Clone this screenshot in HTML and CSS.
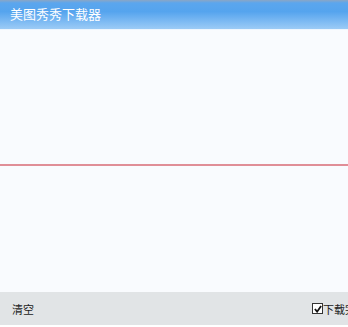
FILE: index.html
```html
<!DOCTYPE html>
<html lang="zh-CN">
<head>
  <meta charset="UTF-8" />
  <title>美图秀秀下载器</title>
  <link rel="stylesheet" href="styles.css">
</head>
<body>
<div class="app">
  <header class="titlebar">美图秀秀下载器</header>
  <section class="list"></section>
  <div class="divider"></div>
  <section class="list list-bottom"></section>
  <footer class="toolbar">
    <span class="clear">清空</span>
    <label class="auto">
      <span class="check">
        <svg width="8" height="8" viewBox="0 0 9 9"><path d="M1 4.5 L3.5 7.5 L8 1" fill="none" stroke="#111" stroke-width="2"/></svg>
      </span>下载完成后自动关闭
    </label>
  </footer>
</div>
</body>
</html>
```

FILE: styles.css
```css
body { margin: 0; background: #fff; font-family: "Noto Sans CJK SC", "DejaVu Sans", sans-serif; }
.app { width: 348px; height: 327px; display: flex; flex-direction: column; overflow: hidden; background: #f9fbfe; }
.titlebar {
  height: 29px;
  line-height: 28px;
  padding-left: 10px;
  color: #fff;
  font-size: 13px;
  background: linear-gradient(#8aa6c6 0, #5ba6ee 3px, #55a4ee 40%, #9ccbf6 100%);
  border-bottom: 1px solid #eef6fe;
}
.list { height: 134px; flex-shrink: 0; }
.list-bottom { height: 126px; }
.divider { height: 2px; background: #e08e97; flex-shrink: 0; }
.toolbar {
  height: 33px;
  flex-shrink: 0;
  background: #e1e4e6;
  border-bottom: 2px solid #fff;
  display: flex;
  align-items: center;
  padding-left: 12px;
  font-size: 11px;
  color: #222;
  white-space: nowrap;
}
.auto {
  margin-left: auto;
  width: 36px;
  flex-shrink: 0;
  display: flex;
  align-items: center;
  font-size: 11px;
}
.check {
  width: 9px; height: 9px;
  flex-shrink: 0;
  border: 1px solid #333;
  background: #fff;
  display: flex; align-items: center; justify-content: center;
}
```
